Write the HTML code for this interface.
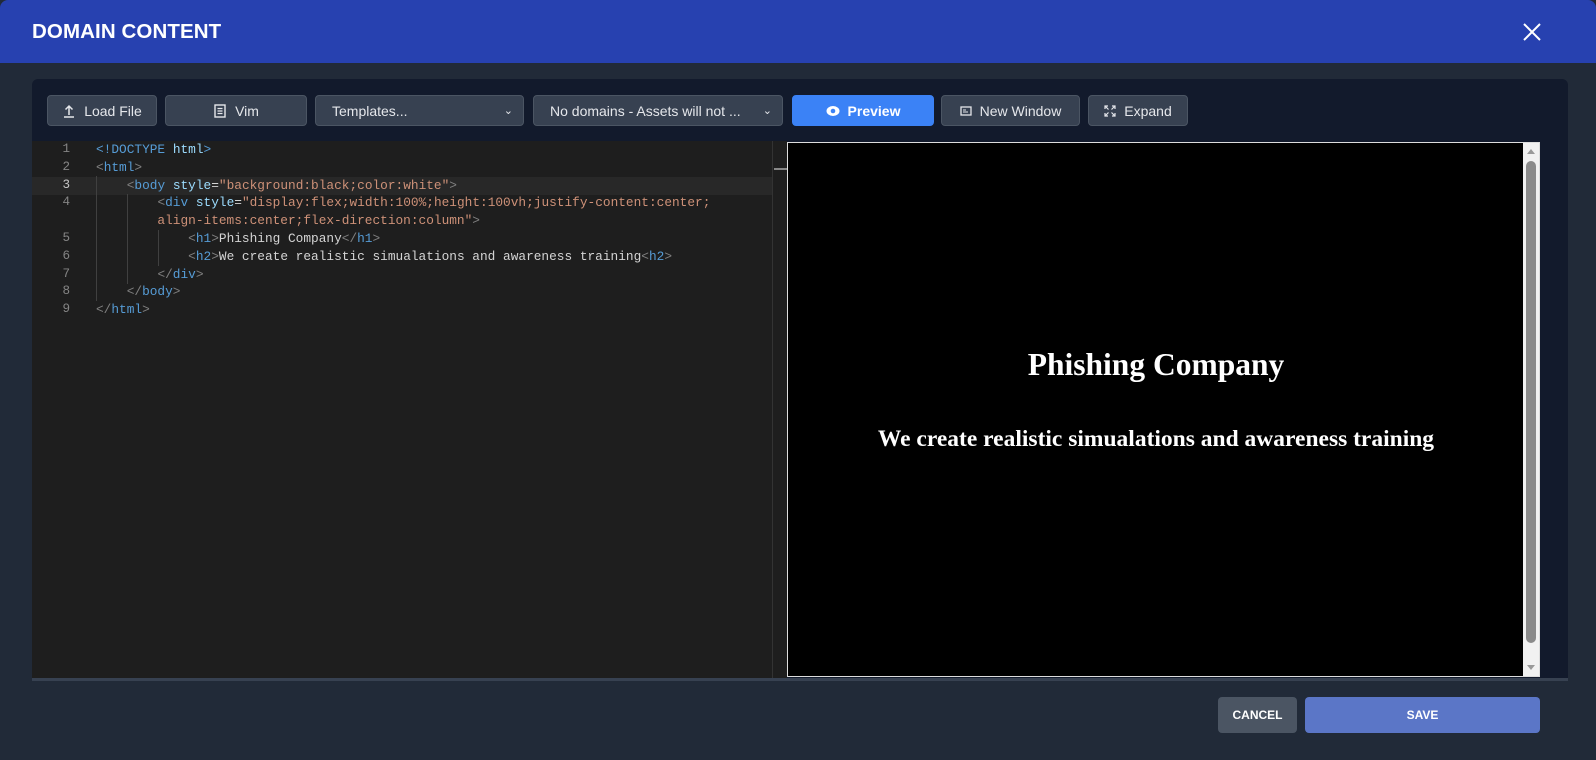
<!DOCTYPE html>
<html><head><style>
*{box-sizing:border-box;margin:0;padding:0}
body{width:1596px;height:760px;background:#212a38;font-family:"Liberation Sans",sans-serif;position:relative;overflow:hidden}
.hdr{position:absolute;left:0;top:0;width:1596px;height:63px;background:#2741b0;border-radius:8px 8px 0 0}
.hdr h1{position:absolute;left:32px;top:20px;color:#fff;font-size:20.5px;font-weight:bold;letter-spacing:0.1px}
.x{position:absolute;left:1522px;top:22px}
.panel{position:absolute;left:32px;top:79px;width:1536px;height:602px;background:#121a2c;border-radius:6px 6px 0 0}
.btn{position:absolute;top:95px;height:31px;background:#374151;border:1px solid #4b5563;border-radius:4px;color:#e5e7eb;font-size:14px;display:flex;align-items:center;justify-content:center;gap:8px}
.sel{justify-content:space-between;padding:0 10px 0 16px}
.editor{position:absolute;left:32px;top:141px;width:740px;height:537px;background:#1e1e1e}
.gut{position:absolute;left:772px;top:141px;width:15px;height:537px;background:#1e1e1e;border-left:1px solid #333}
.code{position:absolute;left:0;top:0;font-family:"Liberation Mono",monospace;font-size:12.8px;line-height:17.8px;color:#d4d4d4;white-space:pre}
.ln{position:absolute;left:0;width:42px;text-align:right;color:#858585;font-family:"Liberation Mono",monospace;font-size:12.6px;line-height:17.8px}
.t{color:#569cd6}.a{color:#9cdcfe}.s{color:#ce9178}.g{color:#808080}
.prev{position:absolute;left:787px;top:142px;width:753px;height:535px;background:#000;border:1px solid #ddd}
.sb{position:absolute;right:0;top:0;width:16px;height:100%;background:#f1f1f1}
.bottomline{position:absolute;left:32px;top:678px;width:1536px;height:3px;background:#374151}
</style></head><body>
<div class="hdr"><h1>DOMAIN CONTENT</h1>
<svg class="x" width="20" height="20" viewBox="0 0 20 20"><path d="M2 2L18 18M18 2L2 18" stroke="#fff" stroke-width="2"/></svg></div>
<div class="panel"></div>
<div class="btn" style="left:47px;width:110px"><svg width="14" height="14" viewBox="0 0 14 14"><path d="M7 11V2M3.5 5.5L7 2l3.5 3.5M2 13h10" stroke="#e5e7eb" stroke-width="1.5" fill="none"/></svg>Load File</div>
<div class="btn" style="left:165px;width:142px"><svg width="14" height="14" viewBox="0 0 14 14"><rect x="2" y="1" width="10" height="12" stroke="#e5e7eb" stroke-width="1.4" fill="none"/><path d="M4.5 4.5h5M4.5 7h5M4.5 9.5h5" stroke="#e5e7eb" stroke-width="1.2"/></svg>Vim</div>
<div class="btn sel" style="left:315px;width:209px"><span>Templates...</span><span style="font-size:11px">&#8964;</span></div>
<div class="btn sel" style="left:533px;width:250px"><span>No domains - Assets will not ...</span><span style="font-size:11px">&#8964;</span></div>
<div class="btn" style="left:792px;width:142px;background:#3b82f6;border-color:#3b82f6;color:#fff;font-weight:bold"><svg width="14" height="12" viewBox="0 0 14 12"><ellipse cx="7" cy="6" rx="6.5" ry="5" fill="#fff"/><circle cx="7" cy="6" r="2.3" fill="#3b82f6"/></svg>Preview</div>
<div class="btn" style="left:941px;width:139px"><svg width="12" height="10" viewBox="0 0 12 10"><rect x="1" y="1" width="10" height="8" stroke="#e5e7eb" stroke-width="1.3" fill="none"/><path d="M3 4h3M3 6h5" stroke="#e5e7eb"/></svg>New Window</div>
<div class="btn" style="left:1088px;width:100px"><svg width="12" height="12" viewBox="0 0 12 12"><path d="M1 4V1h3M8 1h3v3M11 8v3H8M4 11H1V8M1 1l3.5 3.5M11 1L7.5 4.5M11 11L7.5 7.5M1 11l3.5-3.5" stroke="#e5e7eb" stroke-width="1.2" fill="none"/></svg>Expand</div>
<div class="editor">
<div style="position:absolute;left:0;top:36px;width:740px;height:18px;background:#282828"></div>
<div class="ln" style="top:0;width:38px">1<br>2<br><span style="color:#c6c6c6">3</span><br>4<br><br>5<br>6<br>7<br>8<br>9</div>
<div style="position:absolute;left:64px;top:35px;width:1px;height:125px;background:#404040"></div>
<div style="position:absolute;left:95px;top:53px;width:1px;height:90px;background:#404040"></div>
<div style="position:absolute;left:126px;top:89px;width:1px;height:36px;background:#404040"></div>
<div class="code" style="left:64px"><span class="t">&lt;!DOCTYPE</span> <span class="a">html</span><span class="t">&gt;</span>
<span class="g">&lt;</span><span class="t">html</span><span class="g">&gt;</span>
    <span class="g">&lt;</span><span class="t">body</span> <span class="a">style</span>=<span class="s">"background:black;color:white"</span><span class="g">&gt;</span>
        <span class="g">&lt;</span><span class="t">div</span> <span class="a">style</span>=<span class="s">"display:flex;width:100%;height:100vh;justify-content:center;</span>
<span class="s">        align-items:center;flex-direction:column"</span><span class="g">&gt;</span>
            <span class="g">&lt;</span><span class="t">h1</span><span class="g">&gt;</span>Phishing Company<span class="g">&lt;/</span><span class="t">h1</span><span class="g">&gt;</span>
            <span class="g">&lt;</span><span class="t">h2</span><span class="g">&gt;</span>We create realistic simualations and awareness training<span class="g">&lt;</span><span class="t">h2</span><span class="g">&gt;</span>
        <span class="g">&lt;/</span><span class="t">div</span><span class="g">&gt;</span>
    <span class="g">&lt;/</span><span class="t">body</span><span class="g">&gt;</span>
<span class="g">&lt;/</span><span class="t">html</span><span class="g">&gt;</span></div>
</div>
<div class="gut"><div style="position:absolute;left:1px;top:27px;width:13px;height:2px;background:#888"></div></div>
<div class="prev">
<div style="position:absolute;left:0;width:736px;top:204px;text-align:center;color:#fff;font-family:'Liberation Serif',serif;font-weight:bold;font-size:31.5px">Phishing Company</div>
<div style="position:absolute;left:0;width:736px;top:283px;text-align:center;color:#fff;font-family:'Liberation Serif',serif;font-weight:bold;font-size:23.5px">We create realistic simualations and awareness training</div>
<div class="sb"><div style="position:absolute;left:3px;top:18px;width:10px;height:482px;background:#8a8a8a;border-radius:5px"></div>
<div style="position:absolute;left:4px;top:6px;border:4px solid transparent;border-bottom:5px solid #999;border-top:0"></div>
<div style="position:absolute;left:4px;bottom:6px;border:4px solid transparent;border-top:5px solid #999;border-bottom:0"></div></div>
</div>
<div class="bottomline"></div>
<div style="position:absolute;left:1218px;top:697px;width:79px;height:36px;background:#4b5563;border-radius:4px;color:#fff;font-size:12px;font-weight:bold;display:flex;align-items:center;justify-content:center">CANCEL</div>
<div style="position:absolute;left:1305px;top:697px;width:235px;height:36px;background:#5b76c7;border-radius:4px;color:#fff;font-size:12px;font-weight:bold;display:flex;align-items:center;justify-content:center">SAVE</div>
</body></html>
